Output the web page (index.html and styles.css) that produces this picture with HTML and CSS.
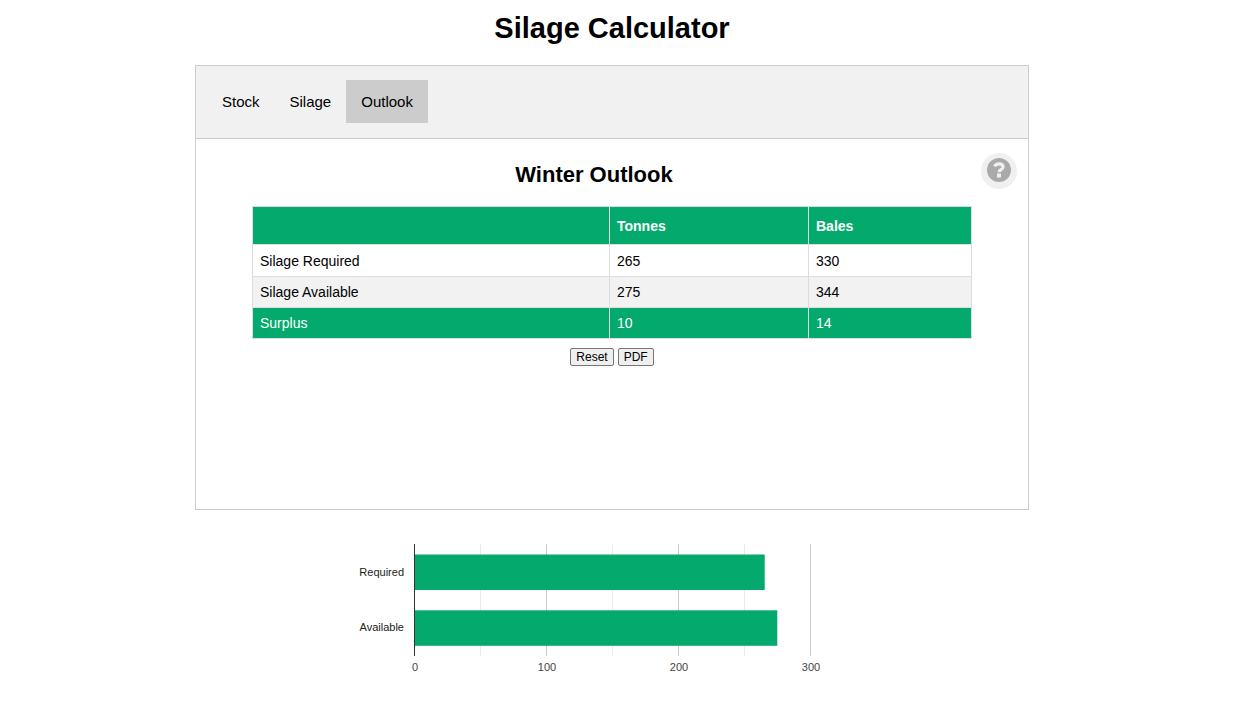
FILE: index.html
```html
<!DOCTYPE html>
<html lang="en">
<head>
<meta charset="utf-8">
<title>Silage Calculator</title>
<link rel="stylesheet" href="styles.css">
</head>
<body>
<h1 class="title">Silage Calculator</h1>
<main class="calculator">
  <nav class="tabs">
    <button class="tab" type="button">Stock</button>
    <button class="tab" type="button">Silage</button>
    <button class="tab tab-active" type="button">Outlook</button>
  </nav>
  <section class="panel">
    <div class="panel-head">
      <h2 class="panel-title">Winter Outlook</h2>
      <button class="help" type="button" aria-label="Help">
        <svg class="help-icon" viewBox="0 0 24 24" aria-hidden="true">
          <circle cx="12" cy="12" r="12" fill="#aaa"/>
          <path d="M7.6 8.4C8.5 6.6 10 5.8 12 5.8c2.6 0 4.1 1.3 4.1 3.1 0 2.9-4.1 2.7-4.1 5.4" fill="none" stroke="#f0f0f0" stroke-width="3.2"/>
          <rect x="10" y="15.6" width="4" height="3.8" rx="0.5" fill="#f0f0f0"/>
        </svg>
      </button>
    </div>
    <table class="outlook">
      <thead>
        <tr><th class="col-name"></th><th class="col-tonnes">Tonnes</th><th>Bales</th></tr>
      </thead>
      <tbody>
        <tr class="first"><td>Silage Required</td><td>265</td><td>330</td></tr>
        <tr class="shaded"><td>Silage Available</td><td>275</td><td>344</td></tr>
        <tr class="total"><td>Surplus</td><td>10</td><td>14</td></tr>
      </tbody>
    </table>
    <div class="actions">
      <button class="action" type="button">Reset</button>
      <button class="action" type="button">PDF</button>
    </div>
  </section>
</main>
<svg class="chart" viewBox="0 0 600 160" role="img" aria-label="Silage required and available, in tonnes">
  <g fill="#ebebeb">
    <rect x="168" y="14" width="1" height="112"/>
    <rect x="300" y="14" width="1" height="112"/>
    <rect x="432" y="14" width="1" height="112"/>
  </g>
  <g fill="#ccc">
    <rect x="234" y="14" width="1" height="112"/>
    <rect x="366" y="14" width="1" height="112"/>
    <rect x="498" y="14" width="1" height="112"/>
  </g>
  <g fill="#04aa6d">
    <rect x="103" y="24.5" width="349.7" height="35.5"/>
    <rect x="103" y="80.3" width="362.3" height="35.5"/>
  </g>
  <rect x="102" y="14" width="1" height="112" fill="#333"/>
  <g class="chart-label" text-anchor="end">
    <text x="92" y="46">Required</text>
    <text x="92" y="101">Available</text>
  </g>
  <g class="chart-tick" text-anchor="middle">
    <text x="103" y="141">0</text>
    <text x="235" y="141">100</text>
    <text x="367" y="141">200</text>
    <text x="499" y="141">300</text>
  </g>
</svg>
</body>
</html>
```
FILE: styles.css
```css
* { box-sizing: border-box; }

body {
  margin: 0;
  padding: 10px 13px 0 0;
  background: #fff;
  color: #000;
  font-family: Arial, "Liberation Sans", sans-serif;
  font-size: 14px;
}

button {
  font-family: inherit;
  color: inherit;
}

.title {
  margin: 0 0 19px;
  font-size: 29px;
  line-height: 36px;
  text-align: center;
}

.calculator {
  max-width: 834px;
  margin: 0 auto;
  border: 1px solid #ccc;
}

.tabs {
  display: flex;
  padding: 14px 11px 15px;
  background: #f1f1f1;
  border-bottom: 1px solid #ccc;
}

.tab {
  padding: 13px 15px;
  border: 0;
  background: none;
  font-size: 15px;
  line-height: 17px;
}

.tab-active { background: #ccc; }

.panel {
  min-height: 370px;
  padding: 14px 11px;
}

.panel-head {
  display: flex;
  align-items: flex-start;
}

.panel-title {
  flex: 1;
  margin: 9px 0 0;
  font-size: 22px;
  line-height: 26px;
  text-align: center;
}

.help {
  display: flex;
  justify-content: center;
  width: 36px;
  height: 36px;
  padding: 5px 0 0;
  border: 0;
  border-radius: 50%;
  background: #f0f0f0;
}

.help-icon {
  width: 24px;
  height: 24px;
}

.outlook {
  width: 100%;
  max-width: 720px;
  margin: 17px auto 0;
  border-collapse: collapse;
  table-layout: fixed;
  line-height: 16px;
  text-align: left;
}

.outlook th,
.outlook td {
  padding: 7px;
  border: 1px solid #ddd;
}

.outlook th {
  height: 38px;
  background: #04aa6d;
  color: #fff;
}

.outlook .first td { padding-top: 8px; }

.col-name { width: 357px; }
.col-tonnes { width: 199px; }

.shaded { background: #f2f2f2; }

.total {
  background: #04aa6d;
  color: #fff;
}

.actions {
  display: flex;
  justify-content: center;
  gap: 4px;
  margin-top: 9px;
}

.action {
  padding: 1px 5px;
  border: 1px solid #767676;
  border-radius: 2px;
  background: #efefef;
  font-size: 12px;
  line-height: 14px;
}

.chart {
  display: block;
  width: 100%;
  max-width: 600px;
  margin: 20px auto 0;
}

.chart-label,
.chart-tick {
  font-size: 11px;
  fill: #222;
}

.chart-tick { fill: #444; }
```
